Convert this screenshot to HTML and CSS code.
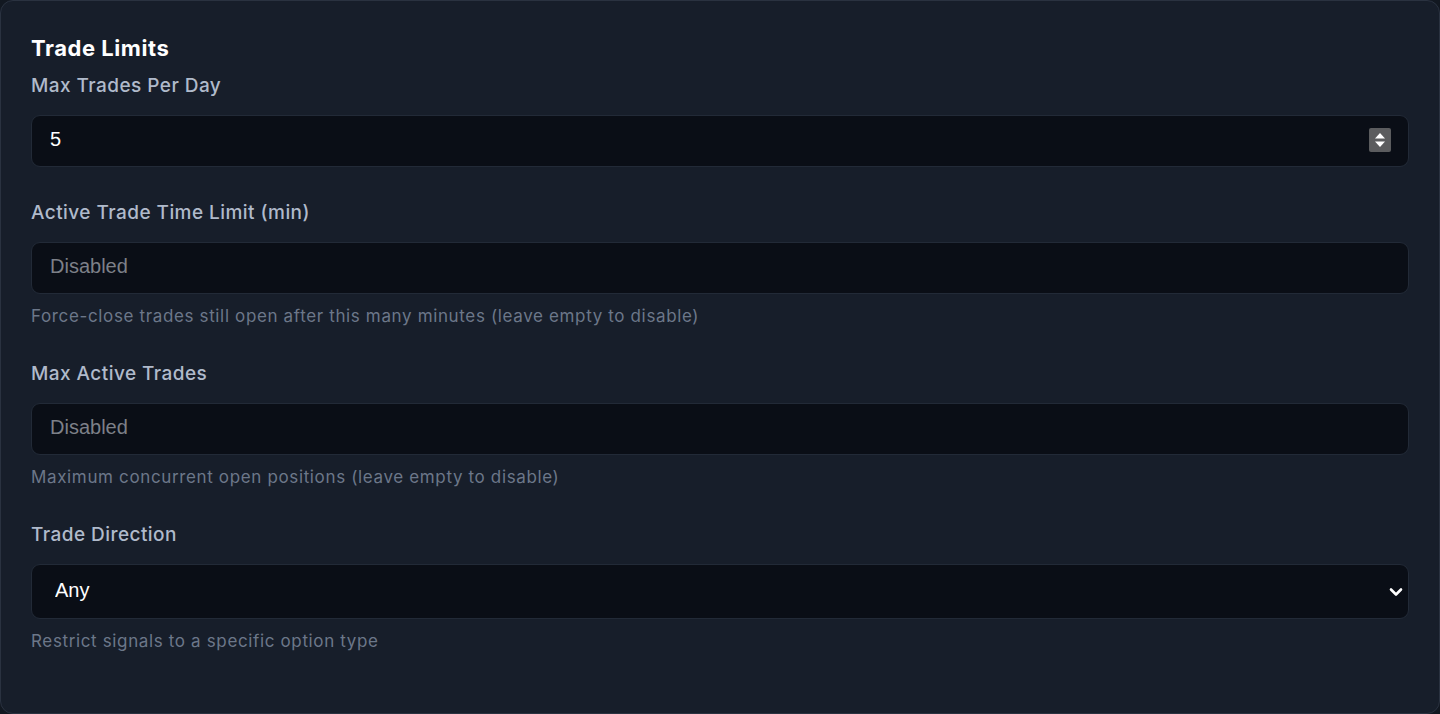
FILE: index.html
```html
<!DOCTYPE html>
<html lang="en">
<head>
<meta charset="utf-8">
<title>Trade Limits</title>
<link rel="stylesheet" href="styles.css">
</head>
<body>
<section class="card">
  <h2 class="card-title">Trade Limits</h2>

  <div class="field">
    <label class="field-label" for="max-trades">Max Trades Per Day</label>
    <div class="control">
      <input id="max-trades" class="control-input" type="text" value="5">
      <span class="spinner" aria-hidden="true">
        <svg width="22" height="24" viewBox="0 0 22 24">
          <rect width="22" height="24" rx="2" fill="#5b5c5e"/>
          <path d="M11 5 L16 10.5 H6 Z" fill="#fff"/>
          <path d="M11 19 L16 13.5 H6 Z" fill="#fff"/>
        </svg>
      </span>
    </div>
  </div>

  <div class="field">
    <label class="field-label" for="time-limit">Active Trade Time Limit (min)</label>
    <div class="control">
      <input id="time-limit" class="control-input" type="text" placeholder="Disabled">
    </div>
    <p class="field-help">Force-close trades still open after this many minutes (leave empty to disable)</p>
  </div>

  <div class="field">
    <label class="field-label" for="max-active">Max Active Trades</label>
    <div class="control">
      <input id="max-active" class="control-input" type="text" placeholder="Disabled">
    </div>
    <p class="field-help">Maximum concurrent open positions (leave empty to disable)</p>
  </div>

  <div class="field">
    <label class="field-label" for="direction">Trade Direction</label>
    <div class="control control-select">
      <select id="direction" class="control-input select-input">
        <option>Any</option>
        <option>Calls</option>
        <option>Puts</option>
      </select>
      <svg class="chevron" width="14" height="10" viewBox="0 0 14 10" aria-hidden="true">
        <path d="M2 2.5 L7 7.5 L12 2.5" fill="none" stroke="#fff" stroke-width="2.6" stroke-linecap="round" stroke-linejoin="round"/>
      </svg>
    </div>
    <p class="field-help">Restrict signals to a specific option type</p>
  </div>
</section>
</body>
</html>
```

FILE: styles.css
```css
* {
  box-sizing: border-box;
}

html, body {
  margin: 0;
  padding: 0;
  background: #121821;
}

body {
  font-family: "Inter", "DejaVu Sans", sans-serif;
  width: 1440px;
  height: 714px;
}

.card {
  height: 714px;
  background: #171e2a;
  border: 1px solid #2a3240;
  border-radius: 13px;
  padding: 33px 30px 30px 30px;
  display: flex;
  flex-direction: column;
  gap: 32px;
}

.card-title {
  margin: 0 0 -22px 0;
  font-size: 22px;
  line-height: 28px;
  font-weight: 700;
  color: #ffffff;
  letter-spacing: 0.55px;
}

.field {
  display: flex;
  flex-direction: column;
}

.field-label {
  font-size: 19px;
  line-height: 28px;
  font-weight: 500;
  color: #b0bacb;
  letter-spacing: 0.45px;
  margin-bottom: 15px;
}

.control {
  display: flex;
  align-items: center;
  height: 52px;
  background: #0a0e16;
  border: 1px solid #222a37;
  border-radius: 9px;
  padding: 0 17px 0 18px;
}

.control-input {
  flex: 1;
  min-width: 0;
  height: 100%;
  background: transparent;
  border: none;
  outline: none;
  padding: 0 0 3px 0;
  font-family: "Liberation Sans", Arial, sans-serif;
  font-size: 20px;
  color: #ffffff;
}

.control-input::placeholder {
  color: #7d8088;
}

.spinner {
  display: flex;
  margin-top: -2px;
}

.control.control-select {
  height: 55px;
  padding: 0 5px 0 19px;
}

.select-input {
  appearance: none;
  -webkit-appearance: none;
  padding-left: 4px;
  cursor: pointer;
}

.select-input option {
  background: #0a0e16;
  color: #fff;
}

.chevron {
  display: block;
}

.field-help {
  margin: 10px 0 0 0;
  font-size: 17px;
  line-height: 24px;
  letter-spacing: 0.64px;
  color: #6c7789;
}
```
